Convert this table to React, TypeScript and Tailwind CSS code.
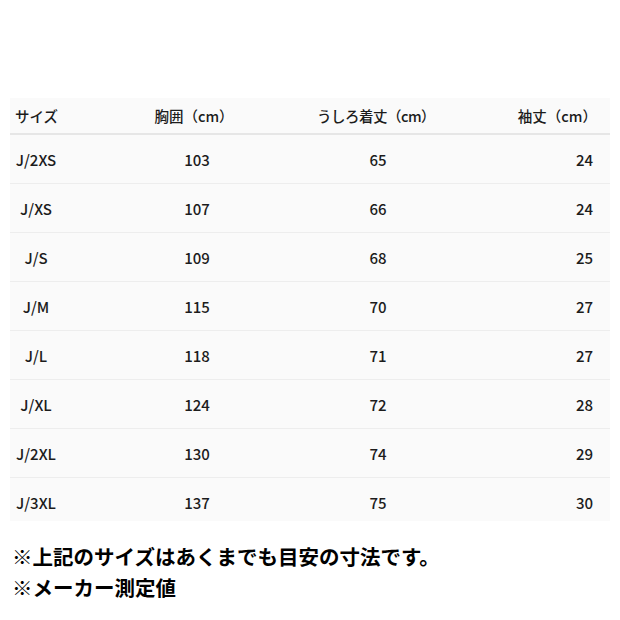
const rows = [
  ["J/2XS", "103", "65", "24"],
  ["J/XS", "107", "66", "24"],
  ["J/S", "109", "68", "25"],
  ["J/M", "115", "70", "27"],
  ["J/L", "118", "71", "27"],
  ["J/XL", "124", "72", "28"],
  ["J/2XL", "130", "74", "29"],
  ["J/3XL", "137", "75", "30"],
];

const font = { fontFamily: '"Noto Sans CJK JP", "Noto Sans", sans-serif' };

export default function App() {
  return (
    <div className="w-[620px] h-[620px] bg-white pt-[98px]" style={font}>
      <div className="mx-[10px] w-[600px] bg-[#fafafa] text-[#1c1c1c]">
        <div className="flex h-[37px] items-center border-b-2 border-[#e6e6e6] text-[14.5px] font-medium">
          <div className="w-[52px] pl-[5px]">サイズ</div>
          <div className="w-[266px] text-center pr-[2px]">胸囲（cm）</div>
          <div className="w-[96px] flex justify-center whitespace-nowrap tracking-[-0.5px]">
            <span>うしろ着丈（cm）</span>
          </div>
          <div className="flex-1 text-right pr-[13px]">袖丈（cm）</div>
        </div>
        {rows.map((r, i) => (
          <div
            key={r[0]}
            className={
              i === rows.length - 1
                ? "flex h-[43px] items-start pt-[14px] text-[15px] font-medium"
                : "flex h-[49px] items-start pt-[14px] text-[15px] font-medium border-b border-[#ededed]"
            }
          >
            <div className="w-[52px] text-center">{r[0]}</div>
            <div className="w-[266px] text-center pl-[4px]">{r[1]}</div>
            <div className="w-[96px] text-center pl-[4px]">{r[2]}</div>
            <div className="flex-1 text-right pr-[17px]">{r[3]}</div>
          </div>
        ))}
      </div>
      <div className="mt-[20px] pl-[12px] text-[20.5px] font-bold leading-[31px] text-black">
        <p>※上記のサイズはあくまでも目安の寸法です。</p>
        <p>※メーカー測定値</p>
      </div>
    </div>
  );
}
